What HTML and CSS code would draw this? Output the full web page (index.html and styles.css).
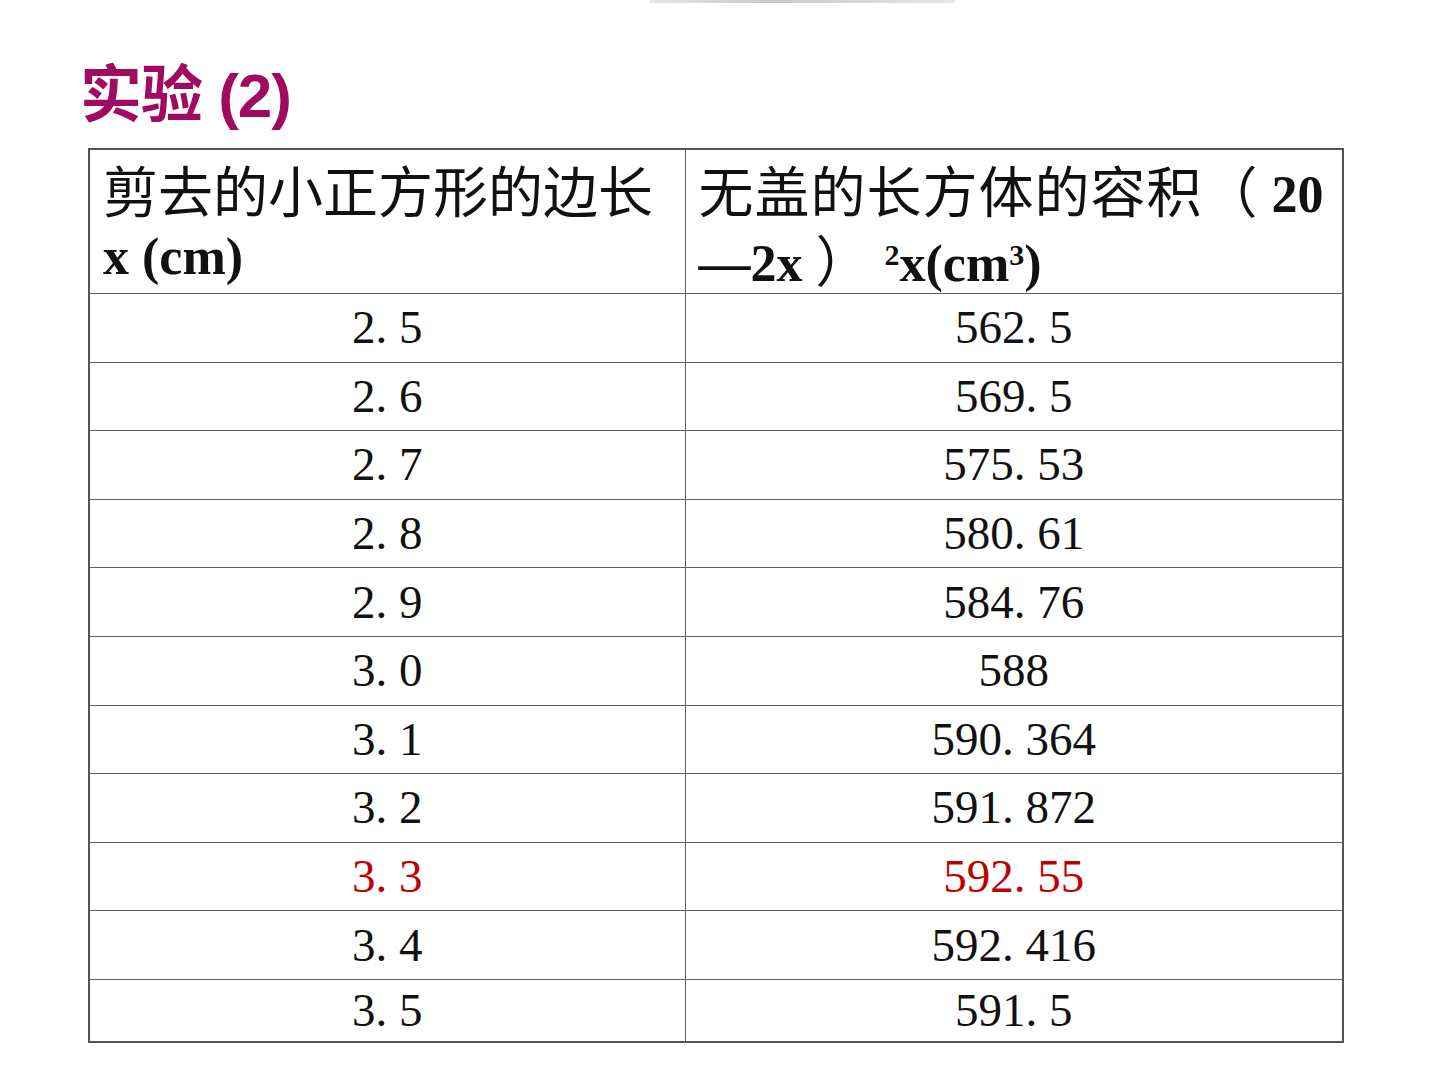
FILE: index.html
```html
<!DOCTYPE html>
<html lang="zh">
<head>
<meta charset="utf-8">
<title>实验 (2)</title>
<link rel="stylesheet" href="styles.css">
</head>
<body>
<div class="slide">
  <div class="topbar"></div>
  <h1 class="title">实验 (2)</h1>
  <table class="data">
    <colgroup><col class="col1"><col class="col2"></colgroup>
    <tr class="head">
      <td class="c1"><div class="hline"><span class="cjk">剪去的小正方形的边长</span></div><div class="hline"><b class="lat">x (cm)</b></div></td>
      <td class="c2"><div class="hline"><span class="cjk">无盖的长方体的容积（</span><b class="lat"> 20</b></div><div class="hline"><b class="lat">—2x </b><span class="cjk">）</span><b class="lat"> <sup>2</sup>x(cm<sup>3</sup>)</b></div></td>
    </tr>
    <tr><td>2. 5</td><td>562. 5</td></tr>
    <tr><td>2. 6</td><td>569. 5</td></tr>
    <tr><td>2. 7</td><td>575. 53</td></tr>
    <tr><td>2. 8</td><td>580. 61</td></tr>
    <tr><td>2. 9</td><td>584. 76</td></tr>
    <tr><td>3. 0</td><td>588</td></tr>
    <tr><td>3. 1</td><td>590. 364</td></tr>
    <tr><td>3. 2</td><td>591. 872</td></tr>
    <tr class="hl"><td>3. 3</td><td>592. 55</td></tr>
    <tr><td>3. 4</td><td>592. 416</td></tr>
    <tr class="last"><td>3. 5</td><td>591. 5</td></tr>
  </table>
</div>
</body>
</html>
```
FILE: styles.css
```css
html, body {
  margin: 0;
  padding: 0;
  background: #ffffff;
}
.slide {
  position: relative;
  width: 1440px;
  height: 1080px;
  overflow: hidden;
  background: #ffffff;
  padding-top: 56px;
  box-sizing: border-box;
}
.topbar {
  position: absolute;
  left: 650px;
  top: 0;
  width: 305px;
  height: 3px;
  background: linear-gradient(90deg, #e6e6e6, #c8c8c8 40%, #d8d8d8 70%, #e6e6e6);
}
.title {
  margin: 0 0 0 80px;
  height: 92px;
  font-family: "Liberation Sans", "Noto Sans CJK SC", sans-serif;
  font-weight: 700;
  font-size: 62px;
  line-height: 80px;
  color: #a00a5f;
  white-space: nowrap;
  letter-spacing: -1px;
}
.data {
  margin-left: 88px;
  width: 1256px;
  table-layout: fixed;
  border-collapse: collapse;
  border: 2px solid #555555;
  font-family: "Liberation Serif", "Noto Sans CJK SC", serif;
  font-size: 47px;
  color: #111111;
}
.col1 {
  width: 596px;
}
.data td {
  border: 1.5px solid #5e5e5e;
  height: 67.6px;
  padding: 0;
  text-align: center;
  vertical-align: middle;
  white-space: pre;
  line-height: 1;
}
.data tr.head td {
  height: 138px;
  text-align: left;
  vertical-align: top;
  padding: 5px 0 0 13px;
  color: #111111;
  white-space: normal;
}
.hline {
  height: 66px;
  line-height: 66px;
  white-space: pre;
  overflow: visible;
}
.hline + .hline {
  margin-top: 3px;
}
.cjk {
  font-family: "Noto Sans CJK SC", sans-serif;
  font-weight: 400;
  font-size: 55px;
  line-height: 66px;
}
.c2 .cjk {
  letter-spacing: 1px;
}
.lat {
  font-family: "Liberation Serif", serif;
  font-weight: 700;
  font-size: 52px;
  line-height: 66px;
}
.lat sup {
  font-size: 30px;
  vertical-align: 16px;
  line-height: 0;
}
.data tr.hl td {
  color: #c00000;
}
.data tr.last td {
  height: 61px;
}
```
